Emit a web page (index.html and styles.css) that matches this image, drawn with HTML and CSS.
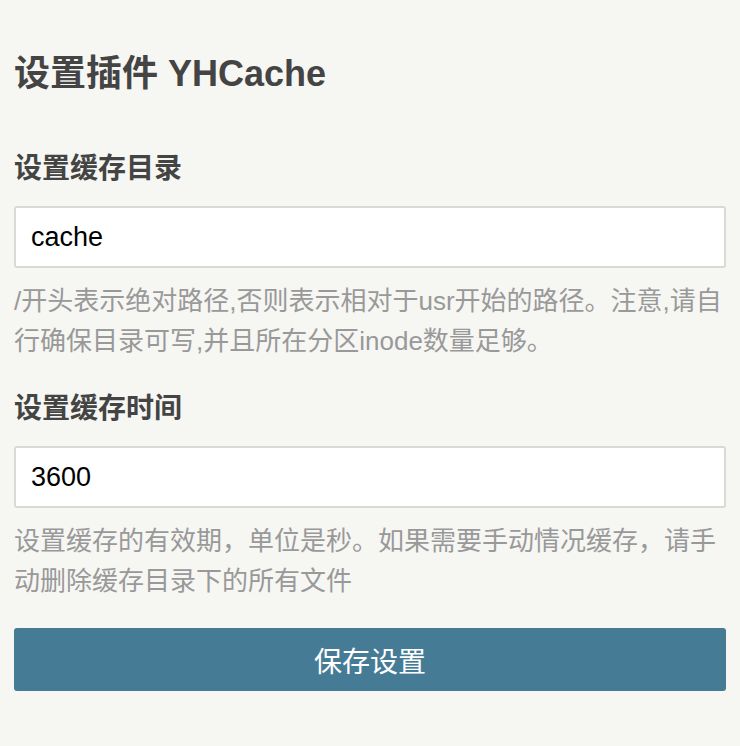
FILE: index.html
```html
<!DOCTYPE html>
<html lang="zh-CN">
<head>
<meta charset="utf-8">
<title>设置插件 YHCache</title>
<link rel="stylesheet" href="styles.css">
</head>
<body>
<main class="config">
  <h2 class="config-title">设置插件 YHCache</h2>
  <form class="config-form" action="#" method="post">
    <div class="field">
      <label class="field-label" for="cache-dir">设置缓存目录</label>
      <input class="field-input" id="cache-dir" type="text" value="cache">
      <p class="field-desc">/开头表示绝对路径,否则表示相对于usr开始的路径。注意,请自行确保目录可写,并且所在分区inode数量足够。</p>
    </div>
    <div class="field">
      <label class="field-label" for="cache-time">设置缓存时间</label>
      <input class="field-input" id="cache-time" type="text" value="3600">
      <p class="field-desc">设置缓存的有效期，单位是秒。如果需要手动情况缓存，请手动删除缓存目录下的所有文件</p>
    </div>
    <button class="btn-primary" type="submit">保存设置</button>
  </form>
</main>
</body>
</html>
```

FILE: styles.css
```css
* {
  box-sizing: border-box;
}

html,
body {
  margin: 0;
  padding: 0;
  background: #f6f6f3;
}

body {
  font-family: "Liberation Sans", "Noto Sans CJK SC", sans-serif;
  color: #444;
}

.config {
  padding: 0 14px;
}

.config-title {
  margin: 49px 0 0;
  font-size: 36px;
  line-height: 50px;
  font-weight: bold;
  color: #444;
}

.config-form {
  display: flex;
  flex-direction: column;
}

.field {
  display: flex;
  flex-direction: column;
}

.field:first-child {
  margin-top: 50px;
}

.field + .field {
  margin-top: 28px;
}

.field-label {
  font-size: 28px;
  line-height: 40px;
  font-weight: bold;
  color: #444;
}

.field-input {
  margin-top: 17px;
  height: 62px;
  width: 100%;
  padding: 0 15px;
  border: 2px solid #d9d9d6;
  border-radius: 3px;
  background: #fff;
  font-family: "Liberation Sans", "Noto Sans CJK SC", sans-serif;
  font-size: 27px;
  color: #000;
  outline: none;
}

.field-desc {
  margin: 13px 0 0;
  font-size: 26px;
  line-height: 40px;
  color: #999;
}

.btn-primary {
  margin-top: 27px;
  height: 63px;
  width: 100%;
  border: 0;
  border-radius: 3px;
  background: #467b96;
  color: #fff;
  font-family: "Liberation Sans", "Noto Sans CJK SC", sans-serif;
  font-size: 28px;
  cursor: pointer;
}
```
